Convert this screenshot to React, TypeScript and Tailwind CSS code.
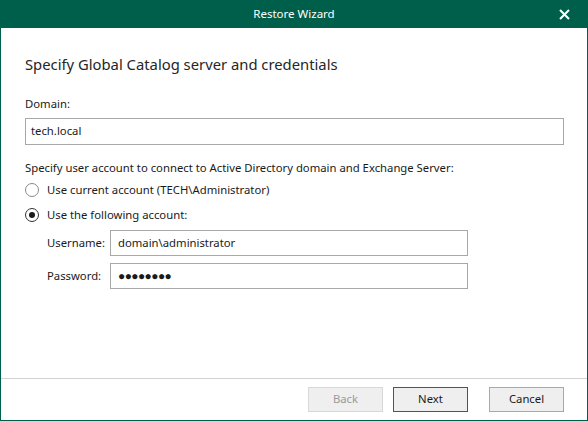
import React from "react";

const font = { fontFamily: '"Noto Sans", "Segoe UI", sans-serif' };

export default function App() {
  return (
    <div className="w-[588px] h-[421px] flex flex-col bg-white text-[11.3px] text-[#1a1a1a]" style={font}>
      <div className="h-[28px] bg-[#005f4b] flex items-center justify-center relative text-white text-[11.5px]">
        <span>Restore Wizard</span>
        <svg className="absolute right-[18px] top-[9px]" width="11" height="11" viewBox="0 0 11 11">
          <path d="M1 1L10 10M10 1L1 10" stroke="white" strokeWidth="2" />
        </svg>
      </div>
      <div className="flex-1 flex flex-col border-l border-r border-b border-[#005f4b]">
        <div className="flex-1 flex flex-col pl-[24px] pr-[23px]">
          <div className="mt-[25px] text-[14.8px] leading-[22px] text-[#262626]">Specify Global Catalog server and credentials</div>
          <div className="mt-[21px] leading-[16px]">Domain:</div>
          <div className="mt-[6px] h-[27px] border border-[#a8a8a8] flex items-center pl-[5px]">tech.local</div>
          <div className="mt-[15px] leading-[16px]">Specify user account to connect to Active Directory domain and Exchange Server:</div>
          <div className="mt-[6px] flex items-center gap-[8px] leading-[16px]">
            <span className="w-[14px] h-[14px] rounded-full border border-[#8a8a8a] bg-white" />
            <span>Use current account (TECH\Administrator)</span>
          </div>
          <div className="mt-[9px] flex items-center gap-[8px] leading-[16px]">
            <span className="w-[14px] h-[14px] rounded-full border border-[#333] bg-white flex items-center justify-center">
              <span className="w-[6px] h-[6px] rounded-full bg-[#1a1a1a]" />
            </span>
            <span>Use the following account:</span>
          </div>
          <div className="mt-[7px] ml-[22px] flex items-center">
            <span className="w-[63px]">Username:</span>
            <div className="w-[358px] h-[26px] border border-[#a8a8a8] flex items-center pl-[7px]">domain\administrator</div>
          </div>
          <div className="mt-[7px] ml-[22px] flex items-center">
            <span className="w-[63px]">Password:</span>
            <div className="w-[358px] h-[26px] border border-[#a8a8a8] flex items-center pl-[7px] text-[12px] tracking-[-0.6px]">●●●●●●●●</div>
          </div>
        </div>
        <div className="h-[42px] border-t border-[#d2d2d2] flex items-center justify-end pr-[23px] gap-[10px]">
          <button className="w-[75px] h-[25px] border border-[#d8d8d8] bg-[#efefef] text-[#9a9a9a]">Back</button>
          <button className="w-[75px] h-[25px] border border-[#1f5fa0] bg-[#efefef] text-[#1a1a1a] mr-[11px]">Next</button>
          <button className="w-[75px] h-[25px] border border-[#a8a8a8] bg-[#efefef] text-[#1a1a1a]">Cancel</button>
        </div>
      </div>
    </div>
  );
}
